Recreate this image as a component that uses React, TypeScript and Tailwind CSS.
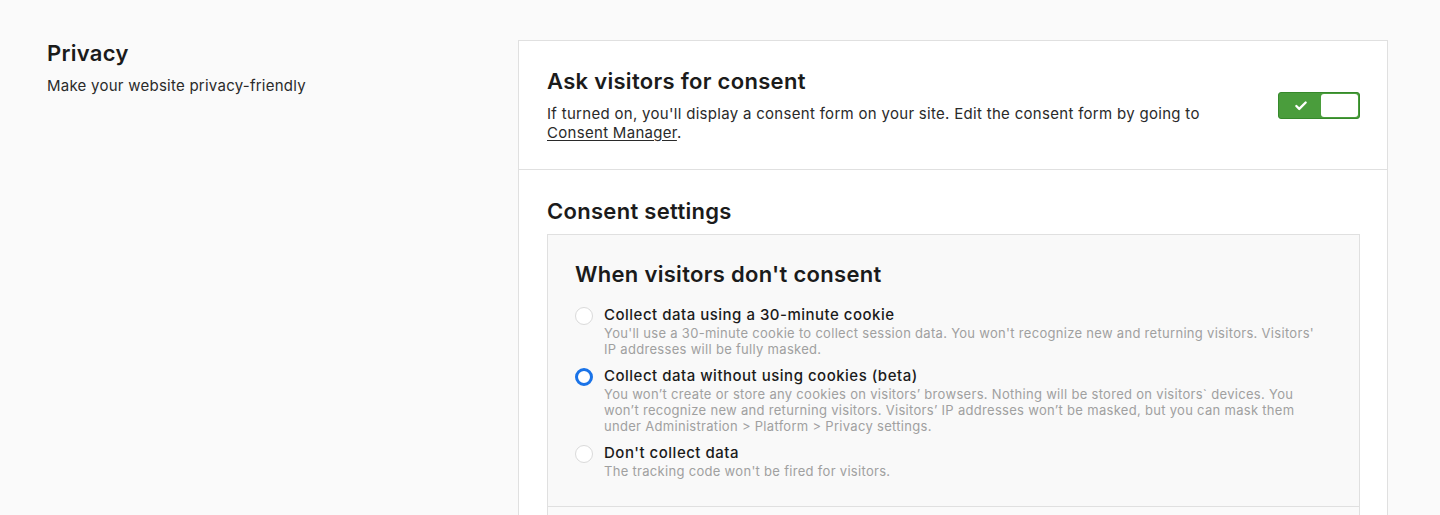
import { Check } from "lucide-react";

type Option = {
  id: string;
  title: string;
  lines: string[];
};

const options: Option[] = [
  {
    id: "cookie",
    title: "Collect data using a 30-minute cookie",
    lines: [
      "You'll use a 30-minute cookie to collect session data. You won't recognize new and returning visitors. Visitors'",
      "IP addresses will be fully masked.",
    ],
  },
  {
    id: "cookieless",
    title: "Collect data without using cookies (beta)",
    lines: [
      "You won’t create or store any cookies on visitors’ browsers. Nothing will be stored on visitors` devices. You",
      "won’t recognize new and returning visitors. Visitors’ IP addresses won’t be masked, but you can mask them",
      "under Administration > Platform > Privacy settings.",
    ],
  },
  {
    id: "none",
    title: "Don't collect data",
    lines: ["The tracking code won't be fired for visitors."],
  },
];

function Radio({ checked }: { checked: boolean }) {
  if (checked) {
    return <span className="mt-[2px] block h-[18px] w-[18px] shrink-0 rounded-full border-[3px] border-[#1a73e8] bg-white" />;
  }
  return <span className="mt-[2px] block h-[18px] w-[18px] shrink-0 rounded-full border border-[#dadada] bg-white" />;
}

function Toggle() {
  return (
    <div className="flex h-[27px] w-[82px] shrink-0 items-stretch rounded-[3px] border border-[#36892b] bg-[#4a9d3c] p-px">
      <div className="flex flex-1 items-center justify-center text-white">
        <Check size={14} strokeWidth={4} />
      </div>
      <div className="w-[37px] rounded-[3px] bg-white" />
    </div>
  );
}

export default function App() {
  return (
    <div
      className="h-[515px] overflow-hidden bg-[#fafafa] text-[#1b1b1b]"
      style={{ fontFamily: "Inter, 'Liberation Sans', sans-serif" }}
    >
      <div className="flex pl-[47px] pr-[52px] pt-[40px]">
        <div className="w-[471px] shrink-0">
          <h1 className="mt-[-1px] text-[22px] font-semibold leading-[28px] tracking-[0.3px]">Privacy</h1>
          <p className="mt-[9px] text-[15px] leading-[20px] tracking-[0.25px] text-[#2a2a2a]">Make your website privacy-friendly</p>
        </div>

        <div className="flex-1 border border-[#e0e0e0] bg-white">
          <div className="flex items-start justify-between border-b border-[#e0e0e0] pl-[28px] pr-[27px] pb-[27px] pt-[26px]">
            <div className="w-[690px]">
              <h2 className="text-[22px] font-semibold leading-[28px] tracking-[0.3px]">Ask visitors for consent</h2>
              <p className="mt-[9px] text-[15px] leading-[19px] tracking-[0.3px] text-[#2a2a2a]">
                If turned on, you'll display a consent form on your site. Edit the consent form by going to{" "}
                <a className="underline underline-offset-2">Consent Manager</a>.
              </p>
            </div>
            <div className="pt-[25px]">
              <Toggle />
            </div>
          </div>

          <div className="pl-[28px] pr-[27px] pt-[27px]">
            <h2 className="text-[22px] font-semibold leading-[28px] tracking-[0.3px]">Consent settings</h2>
            <div className="mt-[9px] border border-[#e0e0e0] bg-[#f9f9f9]">
              <div className="border-b border-[#e0e0e0] px-[27px] pb-[27px] pt-[25px]">
                <h3 className="text-[22px] font-semibold leading-[28px] tracking-[0.3px]">When visitors don't consent</h3>
                <div className="mt-[17px] flex flex-col gap-[9px]">
                  {options.map((o) => (
                    <label key={o.id} className="flex items-start gap-[11px]">
                      <Radio checked={o.id === "cookieless"} />
                      <div>
                        <div className="text-[15px] font-medium leading-[20px] tracking-[0.5px]">{o.title}</div>
                        <div className="text-[13px] leading-[16px] tracking-[0.3px] text-[#a0a0a0]">
                          {o.lines.map((l) => (
                            <div key={l}>{l}</div>
                          ))}
                        </div>
                      </div>
                    </label>
                  ))}
                </div>
              </div>
              <div className="h-[60px] bg-[#fafafa]" />
            </div>
          </div>
        </div>
      </div>
    </div>
  );
}
